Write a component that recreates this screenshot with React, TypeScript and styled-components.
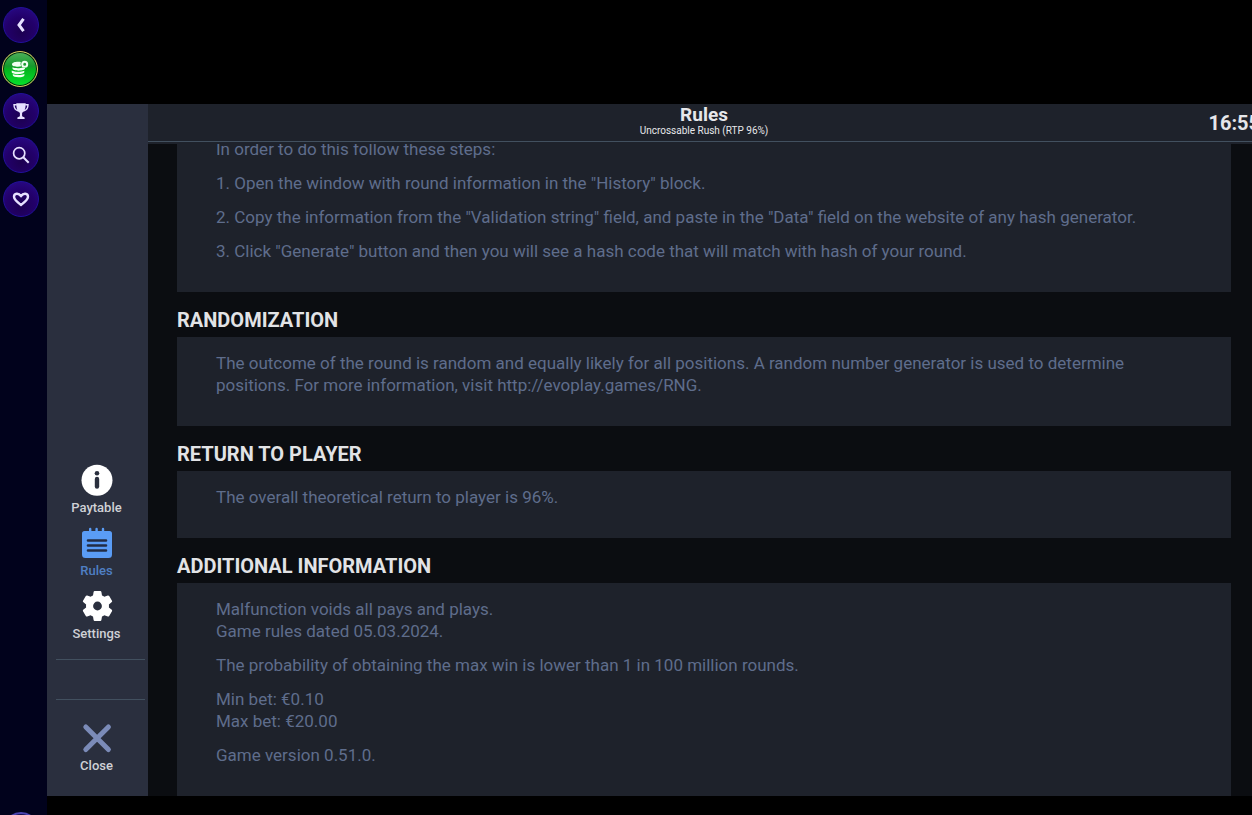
import React from "react";
import styled, { createGlobalStyle } from "styled-components";

const GlobalStyle = createGlobalStyle`
  *, *::before, *::after { box-sizing: border-box; }
  body {
    margin: 0;
    background: #000;
    font-family: Roboto, "Liberation Sans", sans-serif;
    overflow: hidden;
  }
  h1, h2, p { margin: 0; }
  button { font: inherit; cursor: pointer; }
`;

const Page = styled.div`
  display: flex;
  height: 100vh;
  overflow: hidden;
`;

const Rail = styled.nav`
  flex: none;
  display: flex;
  flex-direction: column;
  gap: 6px;
  width: 47px;
  padding: 7px 3px 0;
  background: #01021c;
  overflow: hidden;
`;

const RailGroup = styled.div<{ $last?: boolean }>`
  display: flex;
  flex-direction: column;
  gap: 8px;
  ${(p) => p.$last && "margin-top: auto; margin-bottom: -33px;"}
`;

const RailButton = styled.button<{ $tone?: "violet" | "green" | "outline" }>`
  flex: none;
  display: grid;
  place-items: center;
  width: 36px;
  height: 36px;
  padding: 0;
  border: 1px solid #22109a;
  border-radius: 50%;
  color: #e6e0ff;
  background: radial-gradient(circle at 50% 70%, #1c0050 0%, #22006a 50%, #2a0c8c 100%);
  ${(p) =>
    p.$tone === "green" &&
    `
    margin-left: -1px;
    border-color: #d9c95e;
    color: #f2fff2;
    background: linear-gradient(#4fae5c 0%, #159a2c 42%, #04b51e 52%, #06e22c 100%);
    box-shadow: inset 0 0 0 1px #06280c;
  `}
  ${(p) => p.$tone === "outline" && "border: 2px solid #4a44b0; background: #14104c;"}
`;

const Stage = styled.main`
  flex: 1;
  min-width: 0;
  display: flex;
  padding: 104px 0 19px;
  overflow: hidden;
`;

const Frame = styled.div`
  flex: none;
  display: flex;
  width: calc(100% + 8px);
  min-height: 0;
  background: #0b0d11;
`;

const Sidebar = styled.nav`
  flex: none;
  display: flex;
  flex-direction: column;
  justify-content: flex-end;
  width: 101px;
  padding: 0 3px 22px 9px;
  background: #2a2f3e;
`;

const Menu = styled.div`
  display: flex;
  flex-direction: column;
  gap: 11px;
  padding-right: 8px;
`;

const MenuButton = styled.button<{ $active?: boolean }>`
  display: flex;
  flex-direction: column;
  align-items: center;
  gap: 4px;
  padding: 0;
  border: 0;
  background: none;
  color: ${(p) => (p.$active ? "#4f7fc4" : "#cfd1d6")};
  font-size: 13px;
  font-weight: 500;
  line-height: 16px;
  svg { display: block; }
`;

const Divider = styled.hr<{ $lower?: boolean }>`
  width: 100%;
  height: 1px;
  margin: ${(p) => (p.$lower ? "39px 0 22px" : "17px 0 0")};
  border: 0;
  background: #42505f;
`;

const Content = styled.div`
  flex: 1;
  min-width: 0;
  display: flex;
  flex-direction: column;
`;

const Header = styled.header`
  flex: none;
  display: grid;
  grid-template-columns: 1fr auto 1fr;
  align-items: center;
  height: 38px;
  border-bottom: 1px solid #42505f;
  background: #1e222b;
  color: #e6e7ea;
`;

const Heading = styled.div`
  grid-column: 2;
  align-self: start;
  padding-top: 1px;
  text-align: center;
`;

const Title = styled.h1`
  font-size: 19px;
  font-weight: 700;
  line-height: 20px;
`;

const Subtitle = styled.p`
  font-size: 10px;
  line-height: 12px;
`;

const Clock = styled.time`
  justify-self: end;
  font-size: 20px;
  font-weight: 700;
  line-height: 24px;
`;

const Scroller = styled.div`
  flex: 1;
  min-height: 0;
  display: flex;
  flex-direction: column;
  justify-content: flex-end;
  padding: 0 29px;
  border-top: 2px solid #1e222b;
  overflow: hidden;
`;

const Section = styled.section`
  flex: none;
`;

const SectionTitle = styled.h2`
  padding: 16px 0 5px;
  color: #e2e3e6;
  font-size: 20px;
  font-weight: 700;
  line-height: 24px;
`;

const Panel = styled.div`
  display: flex;
  flex-direction: column;
  gap: 12px;
  padding: 15px 39px 30px;
  background: #1e222b;
  color: #5f6d8c;
  font-size: 17px;
  line-height: 22px;
`;

const BackIcon = () => (
  <svg width="18" height="18" viewBox="0 0 18 18" fill="none" stroke="currentColor" strokeWidth="3">
    <path d="M11.500 2.800 7 9l4.500 6.200" />
  </svg>
);

const CoinsIcon = () => (
  <svg width="20" height="20" viewBox="0 0 20 20" fill="currentColor">
    <path d="M2 5.500c0-2 2.800-2.800 6-2.800 1 0 2 .1 2.900.3-.6 1.400-.4 3 .5 4.200-1 .3-2.200.5-3.400.5-3.200 0-6-.6-6-2.200Z" />
    <path d="M2.500 8.300c2.500 1.200 7.500 1.200 10.500.1.700.4 1.300.5 2 .5v.7c0 1.200-2.800 2.100-6.300 2.100-3.400 0-6.200-.9-6.200-2.100Z" />
    <path d="M1.700 11.500c3 1.700 9 1.800 12.600.3v1.300c0 1.200-2.900 2.100-6.400 2.100s-6.200-.9-6.200-2.200Z" />
    <path d="M2.800 15c3 1.400 8.500 1.400 11.600-.1v1.300c0 1.200-2.600 2.100-5.900 2.100-3.200 0-5.700-.8-5.700-2Z" />
    <circle cx="14.700" cy="5.200" r="2.500" fill="none" stroke="currentColor" strokeWidth="2" />
  </svg>
);

const TrophyIcon = () => (
  <svg width="18" height="18" viewBox="0 0 18 18" fill="currentColor">
    <path d="M4.300 1.200h9.400c0 5.200-1 8.500-3.600 9.600v3.400l2.500 1.200v1.500H5.400v-1.500l2.500-1.200v-3.400C5.300 9.700 4.300 6.400 4.300 1.200Z" />
    <path d="M4.800 2.800H2c0 3.400 1.400 5.400 4.100 5.900M13.200 2.800H16c0 3.400-1.400 5.400-4.100 5.900" fill="none" stroke="currentColor" strokeWidth="1.400" />
  </svg>
);

const SearchIcon = () => (
  <svg width="18" height="18" viewBox="0 0 18 18" fill="none" stroke="currentColor">
    <circle cx="7.200" cy="7.200" r="5.600" strokeWidth="1.700" />
    <path d="m11.300 11.300 5.400 5.400" strokeWidth="2" />
  </svg>
);

const HeartIcon = () => (
  <svg width="18" height="18" viewBox="0 0 18 18" fill="none" stroke="currentColor" strokeWidth="2.400" strokeLinejoin="round">
    <path d="M9 15C5 12 2 9.800 2 6.800 2 3.200 6.600 2.500 9 6.200c2.400-3.700 7-3 7 .6C16 9.800 13 12 9 15Z" />
  </svg>
);

const InfoIcon = () => (
  <svg width="32" height="32" viewBox="0 0 32 32">
    <circle cx="16" cy="16.300" r="15.500" fill="#fff" />
    <circle cx="16" cy="9.200" r="2.300" fill="#2a2f3e" />
    <path d="M16 15v7.500" stroke="#2a2f3e" strokeWidth="4.400" strokeLinecap="round" />
  </svg>
);

const NotepadIcon = () => (
  <svg width="32" height="32" viewBox="0 0 32 32">
    <path
      d="M3.500 4H8V2a1.200 1.200 0 0 1 2.400 0v2h4V2a1.200 1.200 0 0 1 2.400 0v2h4V2a1.200 1.200 0 0 1 2.400 0v2h5.300A2.500 2.500 0 0 1 31 6.500v21a3.500 3.500 0 0 1-3.500 3.500h-23A3.500 3.500 0 0 1 1 27.500v-21A2.500 2.500 0 0 1 3.500 4Z"
      fill="#5a9cf5"
    />
    <path d="M7 13.500h18M7 18.500h18M7 23.500h18" stroke="#222c44" strokeWidth="2.600" strokeLinecap="round" />
  </svg>
);

const GearIcon = () => (
  <svg width="32" height="32" viewBox="0 0 32 32">
    <path
      fillRule="evenodd"
      d="M13.700 1h5.600c.6 0 1 .4 1.100.9l.6 3.600c.8.300 1.600.8 2.300 1.300l3.500-1.300c.5-.2 1.100 0 1.400.5l2.800 4.700c.3.500.2 1.100-.2 1.400l-2.900 2.400c.1.900.1 2 0 2.900l2.900 2.400c.4.300.5.900.2 1.400L28.200 26c-.3.500-.9.700-1.400.5l-3.500-1.300c-.7.500-1.500 1-2.300 1.300l-.6 3.600c-.1.500-.5.900-1.100.9h-5.600c-.6 0-1-.4-1.100-.9l-.6-3.600c-.8-.3-1.600-.8-2.300-1.300l-3.500 1.300c-.5.200-1.100 0-1.400-.5L2 21.200c-.3-.5-.2-1.100.2-1.400l2.900-2.400c-.1-.9-.1-2 0-2.900l-2.900-2.400c-.4-.3-.5-.9-.2-1.400L4.800 6c.3-.5.900-.7 1.400-.5l3.500 1.300c.7-.5 1.500-1 2.300-1.300l.6-3.600c.1-.5.500-.9 1.100-.9Zm2.800 10.600a4.400 4.400 0 1 0 0 8.800 4.400 4.400 0 0 0 0-8.800Z"
      fill="#fff"
    />
  </svg>
);

const CloseIcon = () => (
  <svg width="32" height="32" viewBox="0 0 32 32" stroke="#7b8bb8" strokeWidth="5" strokeLinecap="round">
    <path d="m4.800 5 22.600 22.600M27.400 5 4.800 27.600" />
  </svg>
);

const sections: { title: string; paragraphs: string[][] }[] = [
  {
    title: "RANDOMIZATION",
    paragraphs: [
      [
        "The outcome of the round is random and equally likely for all positions. A random number generator is used to determine positions. For more information, visit http://evoplay.games/RNG.",
      ],
    ],
  },
  {
    title: "RETURN TO PLAYER",
    paragraphs: [["The overall theoretical return to player is 96%."]],
  },
  {
    title: "ADDITIONAL INFORMATION",
    paragraphs: [
      ["Malfunction voids all pays and plays.", "Game rules dated 05.03.2024."],
      ["The probability of obtaining the max win is lower than 1 in 100 million rounds."],
      ["Min bet: €0.10", "Max bet: €20.00"],
      ["Game version 0.51.0."],
    ],
  },
];

const steps = [
  "In order to do this follow these steps:",
  '1. Open the window with round information in the "History" block.',
  '2. Copy the information from the "Validation string" field, and paste in the "Data" field on the website of any hash generator.',
  '3. Click "Generate" button and then you will see a hash code that will match with hash of your round.',
];

export default function App() {
  return (
    <Page>
      <GlobalStyle />
      <Rail>
        <RailGroup>
          <RailButton aria-label="Back"><BackIcon /></RailButton>
          <RailButton $tone="green" aria-label="Deposit"><CoinsIcon /></RailButton>
        </RailGroup>
        <RailGroup>
          <RailButton aria-label="Tournaments"><TrophyIcon /></RailButton>
          <RailButton aria-label="Search"><SearchIcon /></RailButton>
          <RailButton aria-label="Favourites"><HeartIcon /></RailButton>
        </RailGroup>
        <RailGroup $last>
          <RailButton $tone="outline" aria-label="More" />
        </RailGroup>
      </Rail>
      <Stage>
        <Frame>
          <Sidebar>
            <Menu>
              <MenuButton><InfoIcon />Paytable</MenuButton>
              <MenuButton $active><NotepadIcon />Rules</MenuButton>
              <MenuButton><GearIcon />Settings</MenuButton>
            </Menu>
            <Divider />
            <Divider $lower />
            <Menu>
              <MenuButton><CloseIcon />Close</MenuButton>
            </Menu>
          </Sidebar>
          <Content>
            <Header>
              <Heading>
                <Title>Rules</Title>
                <Subtitle>Uncrossable Rush (RTP 96%)</Subtitle>
              </Heading>
              <Clock>16:55</Clock>
            </Header>
            <Scroller>
              <Section>
                <Panel>
                  {steps.map((step) => (
                    <p key={step}>{step}</p>
                  ))}
                </Panel>
              </Section>
              {sections.map((section) => (
                <Section key={section.title}>
                  <SectionTitle>{section.title}</SectionTitle>
                  <Panel>
                    {section.paragraphs.map((lines) => (
                      <p key={lines[0]}>
                        {lines.map((line, i) => (
                          <React.Fragment key={line}>
                            {i > 0 && <br />}
                            {line}
                          </React.Fragment>
                        ))}
                      </p>
                    ))}
                  </Panel>
                </Section>
              ))}
            </Scroller>
          </Content>
        </Frame>
      </Stage>
    </Page>
  );
}
